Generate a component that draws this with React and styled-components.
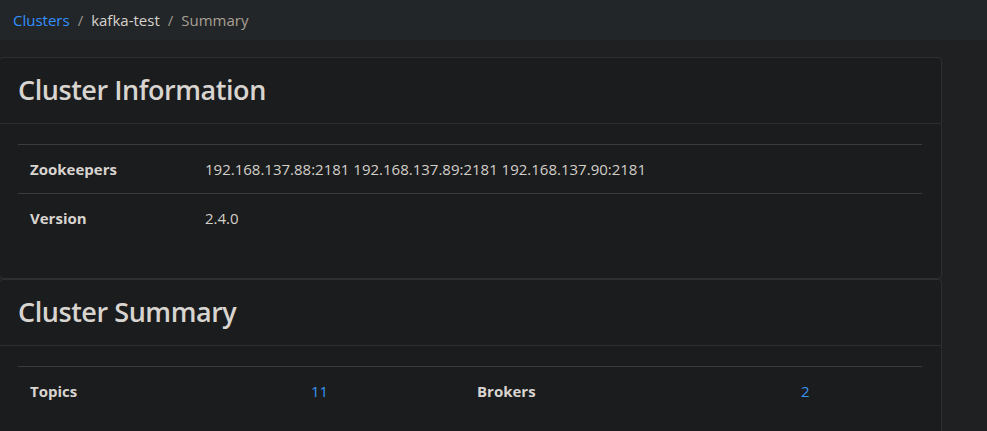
import React from 'react';
import styled, { createGlobalStyle } from 'styled-components';

const GlobalStyle = createGlobalStyle`
  html, body {
    margin: 0;
    padding: 0;
    background-color: #1e2022;
    color: #d3cfc9;
    font-family: "Open Sans", "Liberation Sans", sans-serif;
    font-size: 15px;
  }
`;

const Breadcrumb = styled.nav`
  height: 40px;
  background-color: #232629;
  display: flex;
  align-items: center;
  padding-left: 13px;
  font-size: 15px;
`;

const Crumb = styled.span`
  color: ${(p) => (p.link ? '#3391ff' : p.active ? '#a8a095' : '#d6d2cc')};
`;

const Sep = styled.span`
  color: #9e9689;
  padding: 0 8px;
`;

const Main = styled.main`
  padding-top: 17px;
  margin-left: -1px;
  width: 943px;
`;

const Card = styled.section`
  background-color: #1b1c1e;
  border: 1px solid #2c2f31;
  border-radius: 4px;
`;

const CardHeader = styled.header`
  height: 66px;
  display: flex;
  align-items: center;
  padding: 0 18px 3px 18px;
  box-sizing: border-box;
  border-bottom: 1px solid #2c2f31;
`;

const Title = styled.h2`
  margin: 0;
  font-size: 27px;
  font-weight: 600;
  color: #d8d4cf;
  letter-spacing: -0.45px;
`;

const CardBody = styled.div`
  padding: 20px 19px 20px 18px;
`;

const Table = styled.table`
  width: 100%;
  border-collapse: collapse;
  margin-bottom: 16px;
  table-layout: fixed;
`;

const Cell = styled.td`
  border-top: 1px solid #3a3d40;
  padding: 12px;
  line-height: 24px;
  font-size: 15px;
  vertical-align: top;
  width: ${(p) => p.w || 'auto'};
  font-weight: ${(p) => (p.label ? 700 : 400)};
  color: ${(p) => (p.num ? '#3795f2' : p.label ? '#d8d4cf' : '#d3cfc9')};
  white-space: nowrap;
`;

export default function App() {
  return (
    <>
      <GlobalStyle />
      <Breadcrumb>
        <Crumb link>Clusters</Crumb>
        <Sep>/</Sep>
        <Crumb>kafka-test</Crumb>
        <Sep>/</Sep>
        <Crumb active>Summary</Crumb>
      </Breadcrumb>
      <Main>
        <Card>
          <CardHeader>
            <Title>Cluster Information</Title>
          </CardHeader>
          <CardBody>
            <Table>
              <tbody>
                <tr>
                  <Cell label w="151px">Zookeepers</Cell>
                  <Cell>192.168.137.88:2181 192.168.137.89:2181 192.168.137.90:2181</Cell>
                </tr>
                <tr>
                  <Cell label>Version</Cell>
                  <Cell>2.4.0</Cell>
                </tr>
              </tbody>
            </Table>
          </CardBody>
        </Card>
        <Card>
          <CardHeader>
            <Title>Cluster Summary</Title>
          </CardHeader>
          <CardBody>
            <Table>
              <tbody>
                <tr>
                  <Cell label w="257px">Topics</Cell>
                  <Cell num w="142px">11</Cell>
                  <Cell label w="300px">Brokers</Cell>
                  <Cell num>2</Cell>
                </tr>
              </tbody>
            </Table>
          </CardBody>
        </Card>
      </Main>
    </>
  );
}
